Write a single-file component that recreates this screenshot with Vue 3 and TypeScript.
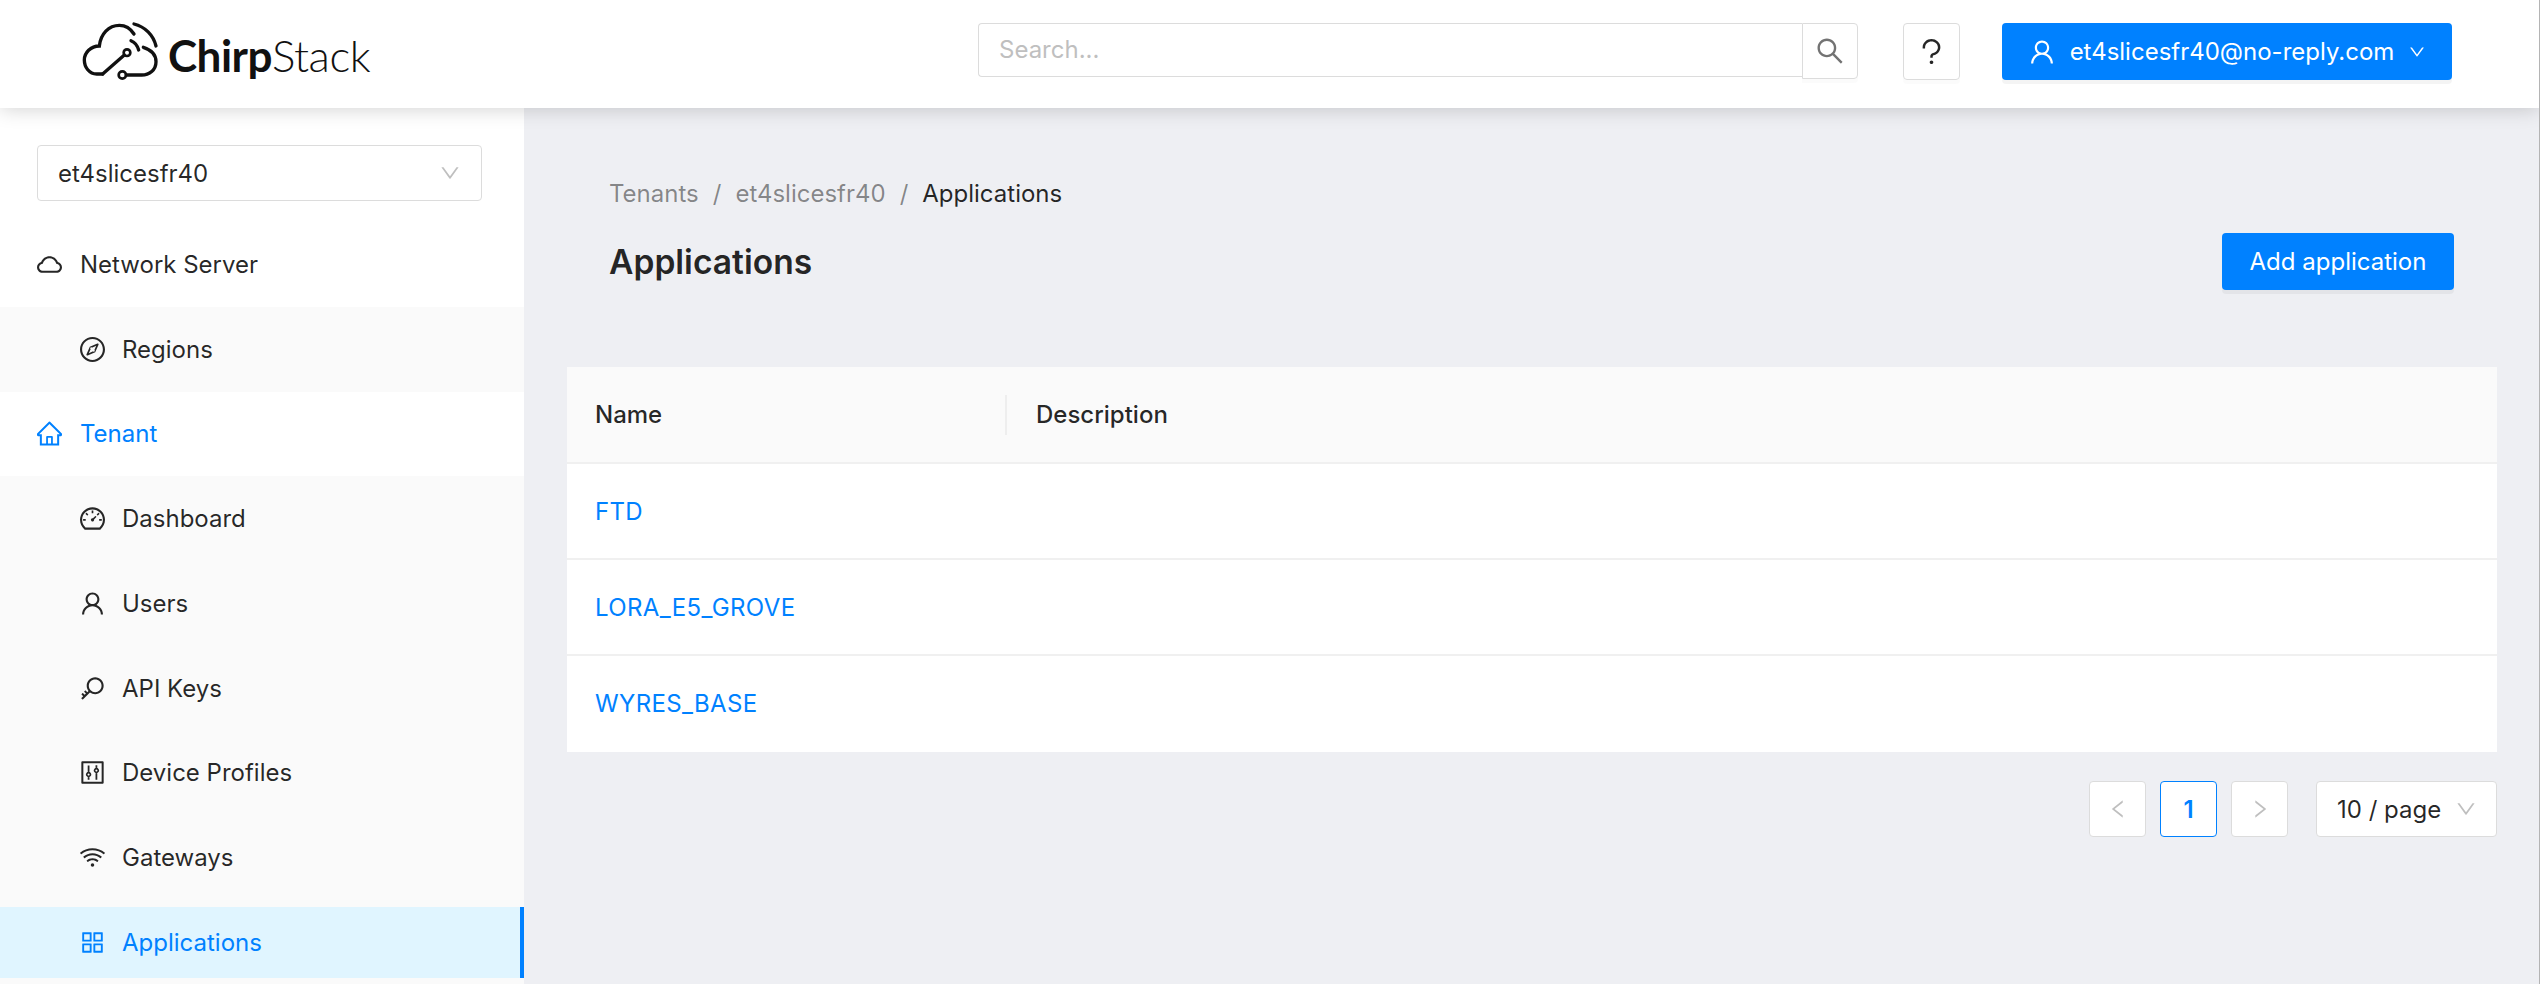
<script setup lang="ts">
interface Item { label: string; d: string; sub?: boolean; kind?: string }
const cloud = 'M811.4 418.7C765.6 297.9 648.9 212 512.2 212S258.8 297.8 213 418.6C127.3 441.1 64 519.1 64 612c0 110.5 89.5 200 199.9 200h496.2C870.5 812 960 722.5 960 612c0-92.7-63.1-170.7-148.6-193.3zm36.3 281a123.07 123.07 0 0 1-87.6 36.3H263.9c-33.1 0-64.2-12.9-87.6-36.3A123.3 123.3 0 0 1 140 612c0-28 9.1-54.3 26.2-76.3a125.7 125.7 0 0 1 66.1-43.7l37.9-9.9 13.9-36.6c8.6-22.8 20.6-44.1 35.7-63.4a245.6 245.6 0 0 1 52.4-49.9c41.1-28.9 89.5-44.2 140-44.2s98.9 15.3 140 44.2c19.9 14 37.5 30.8 52.4 49.9 15.1 19.3 27.1 40.6 35.7 63.4l13.8 36.5 37.8 10c54.3 14.5 92.1 63.8 92.1 120 0 33.1-12.9 64.3-36.3 87.7z'
const compass = 'M512 64C264.6 64 64 264.6 64 512s200.6 448 448 448 448-200.6 448-448S759.4 64 512 64zm0 820c-205.4 0-372-166.6-372-372s166.6-372 372-372 372 166.6 372 372-166.6 372-372 372zm198.4-588.1a32 32 0 0 0-24.5.5L414.9 415 296.4 686c-3.6 8.2-3.6 17.5 0 25.7 3.4 7.8 9.7 13.9 17.7 17 3.8 1.5 7.7 2.2 11.7 2.2 4.4 0 8.7-.9 12.8-2.7l271-118.6 118.5-271a32.06 32.06 0 0 0-17.7-42.7zM576.8 534.4l26.2 26.2-42.4 42.4-26.2-26.2L380 644.4 447.5 490 422 464.4l42.4-42.4 25.5 25.5L644.4 380l-67.6 154.4z'
const home = 'M946.5 505L560.1 118.8l-25.9-25.9a31.5 31.5 0 0 0-44.4 0L77.5 505a63.9 63.9 0 0 0-18.8 46c.4 35.2 29.7 63.3 64.9 63.3h42.5V940h691.8V614.3h43.4c17.1 0 33.2-6.7 45.3-18.8a63.6 63.6 0 0 0 18.7-45.3c0-17-6.7-33.1-18.8-45.2zM568 868H456V664h112v204zm217.9-325.7V868H632V640c0-22.1-17.9-40-40-40H432c-22.1 0-40 17.9-40 40v228H238.1V542.3h-96l370-369.7 23.1 23.1L882 542.3h-96.1z'
const dashboard = 'M924.8 385.6a446.7 446.7 0 0 0-96-142.4 446.7 446.7 0 0 0-142.4-96C631.1 123.8 572.5 112 512 112s-119.1 11.8-174.4 35.2a446.7 446.7 0 0 0-142.4 96 446.7 446.7 0 0 0-96 142.4C75.8 440.9 64 499.5 64 560c0 132.7 58.3 257.7 159.9 343.1l1.7 1.4c5.8 4.8 13.1 7.5 20.6 7.5h531.7c7.5 0 14.8-2.7 20.6-7.5l1.7-1.4C901.7 817.7 960 692.7 960 560c0-60.5-11.9-119.1-35.2-174.4zM761.4 836H262.6A371.12 371.12 0 0 1 140 560c0-99.4 38.7-192.8 109-263 70.3-70.3 163.7-109 263-109 99.4 0 192.8 38.7 263 109 70.3 70.3 109 163.7 109 263 0 105.6-44.5 205.5-122.6 276zM623.5 421.5a8.03 8.03 0 0 0-11.3 0L527.7 506c-18.7-5-39.4-.2-54.1 14.5a55.95 55.95 0 0 0 0 79.2 55.95 55.95 0 0 0 79.2 0 55.87 55.87 0 0 0 14.5-54.1l84.5-84.5c3.1-3.1 3.1-8.2 0-11.3l-28.3-28.3zM490 320h44c4.4 0 8-3.6 8-8v-80c0-4.4-3.6-8-8-8h-44c-4.4 0-8 3.6-8 8v80c0 4.4 3.6 8 8 8zm260 218v44c0 4.4 3.6 8 8 8h80c4.4 0 8-3.6 8-8v-44c0-4.4-3.6-8-8-8h-80c-4.4 0-8 3.6-8 8zm12.7-197.2l-31.1-31.1a8.03 8.03 0 0 0-11.3 0l-56.6 56.6a8.03 8.03 0 0 0 0 11.3l31.1 31.1c3.1 3.1 8.2 3.1 11.3 0l56.6-56.6c3.1-3.1 3.1-8.2 0-11.3zm-458.6-31.1a8.03 8.03 0 0 0-11.3 0l-31.1 31.1a8.03 8.03 0 0 0 0 11.3l56.6 56.6c3.1 3.1 8.2 3.1 11.3 0l31.1-31.1c3.1-3.1 3.1-8.2 0-11.3l-56.6-56.6zM262 530h-80c-4.4 0-8 3.6-8 8v44c0 4.4 3.6 8 8 8h80c4.4 0 8-3.6 8-8v-44c0-4.4-3.6-8-8-8z'
const user = 'M858.5 763.6a374 374 0 0 0-80.6-119.5 375.63 375.63 0 0 0-119.5-80.6c-.4-.2-.8-.3-1.2-.5C719.5 518 760 444.7 760 362c0-137-111-248-248-248S264 225 264 362c0 82.7 40.5 156 102.8 201.1-.4.2-.8.3-1.2.5-44.8 18.9-85 46-119.5 80.6a375.63 375.63 0 0 0-80.6 119.5A371.7 371.7 0 0 0 136 901.8a8 8 0 0 0 8 8.2h60c4.4 0 7.9-3.5 8-7.8 2-77.2 33-149.5 87.8-204.3 56.7-56.7 132-87.9 212.2-87.9s155.5 31.2 212.2 87.9C779 752.7 810 825 812 902.2c.1 4.4 3.6 7.8 8 7.8h60a8 8 0 0 0 8-8.2c-1-47.8-10.9-94.3-29.5-138.2zM512 534c-45.9 0-89.1-17.9-121.6-50.4S340 407.9 340 362c0-45.9 17.9-89.1 50.4-121.6S466.1 190 512 190s89.1 17.9 121.6 50.4S684 316.1 684 362c0 45.9-17.9 89.1-50.4 121.6S557.9 534 512 534z'
const key = 'M608 112c-167.9 0-304 136.1-304 304 0 70.3 23.9 135 63.9 186.5l-41.1 41.1-62.3-62.3a8.15 8.15 0 0 0-11.4 0l-39.8 39.8a8.15 8.15 0 0 0 0 11.4l62.3 62.3-44.9 44.9-62.3-62.3a8.15 8.15 0 0 0-11.4 0l-39.8 39.8a8.15 8.15 0 0 0 0 11.4l62.3 62.3-65.3 65.3a8.03 8.03 0 0 0 0 11.3l42.3 42.3c3.1 3.1 8.2 3.1 11.3 0l253.6-253.6A304.06 304.06 0 0 0 608 720c167.9 0 304-136.1 304-304S775.9 112 608 112zm161.2 465.2C726.2 620.3 668.9 644 608 644c-60.9 0-118.2-23.7-161.2-66.8-43.1-43-66.8-100.3-66.8-161.2 0-60.9 23.7-118.2 66.8-161.2 43-43.1 100.3-66.8 161.2-66.8 60.9 0 118.2 23.7 161.2 66.8 43.1 43 66.8 100.3 66.8 161.2 0 60.9-23.7 118.2-66.8 161.2z'
const control = 'M880 112H144c-17.7 0-32 14.3-32 32v736c0 17.7 14.3 32 32 32h736c17.7 0 32-14.3 32-32V144c0-17.7-14.3-32-32-32zm-40 728H184V184h656v656zM340 264h64v222h-64zM340 682h64v86h-64zM372 488a96 96 0 1 0 .01 0zm0 60a36 36 0 1 1-.01 0zM620 256h64v86h-64zM620 538h64v230h-64zM652 344a96 96 0 1 0 .01 0zm0 60a36 36 0 1 1-.01 0z'
const wifi = 'M723 620.5C666.8 571.6 593.4 542 513 542s-153.8 29.6-210.1 78.6a8.1 8.1 0 0 0-.8 11.2l36 42.9c2.9 3.4 8 3.8 11.4.9C393.1 637.2 450.3 614 513 614s119.9 23.2 163.5 61.5c3.4 2.9 8.5 2.5 11.4-.9l36-42.9c2.8-3.3 2.4-8.3-.9-11.2zm117.4-140.1C751.7 406.5 637.6 362 513 362s-238.7 44.5-327.5 118.4a8.05 8.05 0 0 0-1 11.3l36 42.9c2.8 3.4 7.9 3.8 11.2 1C308 472.2 406.1 434 513 434s205 38.2 281.2 101.6c3.4 2.8 8.4 2.4 11.2-1l36-42.9c2.8-3.4 2.4-8.5-1-11.3zm116.7-139C835.7 241.8 680.3 182 511 182c-168.2 0-322.6 59-443.7 157.4a8 8 0 0 0-1.1 11.4l36 42.9c2.8 3.3 7.8 3.8 11.1 1.1C222 306.7 360.3 254 511 254c151.8 0 291 53.5 400 142.7 3.4 2.8 8.4 2.3 11.2-1.1l36-42.9c2.9-3.4 2.4-8.5-1.1-11.3zM448 778a64 64 0 1 0 128 0 64 64 0 1 0-128 0z'
const appstore = 'M464 144H160c-8.8 0-16 7.2-16 16v304c0 8.8 7.2 16 16 16h304c8.8 0 16-7.2 16-16V160c0-8.8-7.2-16-16-16zm-52 268H212V212h200v200zm452-268H560c-8.8 0-16 7.2-16 16v304c0 8.8 7.2 16 16 16h304c8.8 0 16-7.2 16-16V160c0-8.8-7.2-16-16-16zm-52 268H612V212h200v200zM464 544H160c-8.8 0-16 7.2-16 16v304c0 8.8 7.2 16 16 16h304c8.8 0 16-7.2 16-16V560c0-8.8-7.2-16-16-16zm-52 268H212V612h200v200zm452-268H560c-8.8 0-16 7.2-16 16v304c0 8.8 7.2 16 16 16h304c8.8 0 16-7.2 16-16V560c0-8.8-7.2-16-16-16zm-52 268H612V612h200v200z'
const search = 'M909.6 854.5L649.9 594.8C690.2 542.7 712 479 712 412c0-80.2-31.3-155.4-87.9-212.1-56.6-56.7-132-87.9-212.1-87.9s-155.5 31.3-212.1 87.9C143.2 256.5 112 331.8 112 412c0 80.1 31.3 155.5 87.9 212.1C256.5 680.8 331.8 712 412 712c67 0 130.6-21.8 182.7-62l259.7 259.6a8.2 8.2 0 0 0 11.6 0l43.6-43.5a8.2 8.2 0 0 0 0-11.6zM570.4 570.4C528 612.7 471.8 636 412 636s-116-23.3-158.4-65.6C211.3 528 188 471.8 188 412s23.3-116.1 65.6-158.4C296 211.3 352.2 188 412 188s116.1 23.2 158.4 65.6S636 352.2 636 412s-23.3 116.1-65.6 158.4z'
const down = 'M884 256h-75c-5.1 0-9.9 2.5-12.9 6.6L512 654.2 227.9 262.6c-3-4.1-7.8-6.6-12.9-6.6h-75c-6.5 0-10.3 7.4-6.5 12.7l352.6 486.1c12.8 17.6 39 17.6 51.7 0l352.6-486.1c3.9-5.3.1-12.7-6.4-12.7z'
const left = 'M724 218.3V141c0-6.7-7.7-10.4-12.9-6.3L260.3 486.8a31.86 31.86 0 0 0 0 50.3l450.8 352.1c5.3 4.1 12.9.4 12.9-6.3v-77.3c0-4.9-2.3-9.6-6.1-12.6l-360-281 360-281.1c3.8-3 6.1-7.7 6.1-12.6z'
const right = 'M765.7 486.8L314.9 134.7A7.97 7.97 0 0 0 302 141v77.3c0 4.9 2.3 9.6 6.1 12.6l360 281.1-360 281.1c-3.9 3-6.1 7.7-6.1 12.6V883c0 6.7 7.7 10.4 12.9 6.3l450.8-352.1a31.96 31.96 0 0 0 0-50.4z'
const question = 'M764 280.9c-14-30.6-33.9-58.1-59.3-81.6C653.1 151.4 584.6 125 512 125s-141.1 26.4-192.7 74.2c-25.4 23.6-45.3 51-59.3 81.7-14.6 32-22 65.9-22 100.9v27c0 6.2 5 11.2 11.2 11.2h54c6.2 0 11.2-5 11.2-11.2v-27c0-99.5 88.6-180.4 197.6-180.4s197.6 80.9 197.6 180.4c0 40.8-14.5 79.2-42 111.2-27.2 31.7-65.6 54.4-108.1 64-24.3 5.5-46.2 19.2-61.7 38.8a110.85 110.85 0 0 0-23.9 68.6v31.4c0 6.2 5 11.2 11.2 11.2h54c6.2 0 11.2-5 11.2-11.2v-31.4c0-15.7 10.9-29.5 26-32.9 58.4-13.2 111.4-44.7 149.3-88.7 19.1-22.3 34-47.1 44.3-74 10.7-27.9 16.1-57.2 16.1-87 0-35-7.4-69-22-100.9zM512 787c-30.9 0-56 25.1-56 56s25.1 56 56 56 56-25.1 56-56-25.1-56-56-56z'

const items: Item[] = [
  { label: 'Network Server', d: cloud },
  { label: 'Regions', d: compass, sub: true },
  { label: 'Tenant', d: home, kind: 'open' },
  { label: 'Dashboard', d: dashboard, sub: true },
  { label: 'Users', d: user, sub: true },
  { label: 'API Keys', d: key, sub: true },
  { label: 'Device Profiles', d: control, sub: true },
  { label: 'Gateways', d: wifi, sub: true },
  { label: 'Applications', d: appstore, sub: true, kind: 'selected' },
]
const rows: string[] = ['FTD', 'LORA_E5_GROVE', 'WYRES_BASE']
</script>

<template>
  <div class="page">
    <header class="top">
      <div class="logo">
        <svg class="mark" viewBox="0 0 312 270" fill="none" stroke="#111" stroke-width="10" stroke-linecap="round">
          <path d="M128 192H110C88 192 73 172 73 150C73 128 92 108 118 108C122 72 146 46 178 46C198 46 212 56 222 72" />
          <path d="M250 112C275 120 288 136 288 155C288 180 268 195 245 195H199" />
          <path d="M128 192L193 135" />
          <circle cx="201" cy="128" r="10" stroke-width="8" />
          <circle cx="187" cy="195" r="11" stroke-width="8" />
          <path d="M222 42C255 50 280 75 288 108" />
          <path d="M213 92C225 97 232 105 236 120" />
        </svg>
        <span class="brand"><b>Chirp</b>Stack</span>
      </div>
      <div class="search">
        <div class="search-input">Search...</div>
        <div class="search-btn"><svg class="ico22" viewBox="64 64 896 896"><path :d="search" /></svg></div>
      </div>
      <div class="help"><svg class="ico-q" viewBox="64 64 896 896"><path :d="question" /></svg></div>
      <div class="account">
        <svg class="ico22" viewBox="64 64 896 896"><path :d="user" /></svg>
        <span>et4slicesfr40@no-reply.com</span>
        <svg class="ico14" viewBox="64 64 896 896"><path :d="down" /></svg>
      </div>
    </header>
    <div class="body">
      <aside class="side">
        <div class="side-top">
          <div class="tenant">
            <span>et4slicesfr40</span>
            <svg class="caret" viewBox="64 64 896 896"><path :d="down" /></svg>
          </div>
        </div>
        <nav class="menu">
          <div v-for="it in items" :key="it.label" class="row" :class="[{ sub: it.sub }, it.kind]">
            <div class="row-in">
              <svg class="ico24" viewBox="64 64 896 896"><path :d="it.d" /></svg>
              <span>{{ it.label }}</span>
            </div>
          </div>
        </nav>
      </aside>
      <main class="main">
        <div class="head">
          <div class="crumbs">
            <span class="dim">Tenants</span><span class="sep">/</span>
            <span class="dim">et4slicesfr40</span><span class="sep">/</span>
            <span>Applications</span>
          </div>
          <div class="title-row">
            <h1>Applications</h1>
            <div class="add">Add application</div>
          </div>
        </div>
        <section class="table">
          <div class="thead">
            <div class="c1">Name</div>
            <div class="c2">Description</div>
          </div>
          <div v-for="r in rows" :key="r" class="tr">{{ r }}</div>
        </section>
        <div class="pager">
          <div class="pg"><svg class="ico20" viewBox="64 64 896 896"><path :d="left" /></svg></div>
          <div class="pg cur">1</div>
          <div class="pg"><svg class="ico20" viewBox="64 64 896 896"><path :d="right" /></svg></div>
          <div class="size">
            <span>10 / page</span>
            <svg class="caret" viewBox="64 64 896 896"><path :d="down" /></svg>
          </div>
        </div>
      </main>
    </div>
  </div>
</template>

<style>
html, body { margin: 0; background: #eeeff3; overflow: hidden; }
</style>

<style scoped>
.page { width: 2540px; height: 984px; box-sizing: border-box; border-right: 1px solid #b4b4b4; display: flex; flex-direction: column; overflow: hidden; font-family: Inter, "Liberation Sans", sans-serif; font-size: 24px; color: rgba(0,0,0,.85); }
svg { fill: currentColor; flex: none; display: block; }
.top { height: 108px; flex: none; background: #fff; display: flex; align-items: flex-start; padding: 23px 0 0 60px; box-sizing: border-box; box-shadow: 0 0 20px rgba(0,0,0,.2); position: relative; z-index: 2; }
.logo { display: flex; align-items: center; width: 918px; margin-top: -22px; height: 108px; }
.mark { width: 104px; height: 90px; fill: none; margin-top: -1px; }
.mark path, .mark circle { fill: none; }
.brand { font-family: Lato, sans-serif; font-size: 44px; font-weight: 300; color: #111; margin-left: 4px; letter-spacing: -.5px; }
.brand b { font-weight: 700; }
.search { display: flex; width: 880px; height: 56px; align-items: flex-start; }
.search-input { width: 825px; height: 54px; box-sizing: border-box; border: 1.5px solid #dcdcdc; border-right: 0; border-radius: 4px 0 0 4px; padding-left: 20px; line-height: 51px; color: #bfbfbf; background: #fff; }
.search-btn { width: 56px; height: 56px; box-sizing: border-box; border: 1.5px solid #dcdcdc; border-radius: 0 4px 4px 0; display: flex; align-items: center; justify-content: center; color: #737373; box-shadow: 0 4px 0 rgba(0,0,0,.016); }
.ico22 { width: 28px; height: 28px; }
.ico14 { width: 16px; height: 16px; }
.ico24 { width: 25px; height: 25px; }
.ico20 { width: 20px; height: 20px; color: #bfbfbf; }
.ico-q { width: 29px; height: 29px; }
.help { margin-left: 45px; width: 57px; height: 57px; box-sizing: border-box; border: 1.5px solid #dcdcdc; border-radius: 4px; display: flex; align-items: center; justify-content: center; box-shadow: 0 4px 0 rgba(0,0,0,.016); }
.account { margin-left: 42px; width: 450px; height: 57px; box-sizing: border-box; background: #0081ff; color: #fff; border-radius: 4px; display: flex; align-items: center; justify-content: center; gap: 15px; box-shadow: 0 4px 0 rgba(0,0,0,.045); }
.account .ico22 { width: 26px; height: 26px; }
.body { flex: 1; display: flex; min-height: 0; }
.side { width: 524px; flex: none; background: #fff; }
.side-top { height: 114px; box-sizing: border-box; padding: 37px 42px 0 37px; }
.tenant { height: 56px; box-sizing: border-box; border: 1.5px solid #dcdcdc; border-radius: 4px; padding: 0 21px 0 20px; display: flex; align-items: center; justify-content: space-between; }
.caret { width: 20px; height: 20px; color: #bfbfbf; }
.menu { display: flex; flex-direction: column; width: 526px; }
.row { height: 84.75px; box-sizing: border-box; display: flex; align-items: center; width: 524px; }
.row-in { display: flex; align-items: center; gap: 18px; padding-left: 37px; flex: 1; height: 71px; }
.row.sub { background: #fafafa; }
.row.sub .row-in { padding-left: 80px; gap: 17px; }
.open { color: #0081ff; }
.selected { color: #0081ff; width: 525px; }
.selected .row-in { background: #e0f5ff; border-right: 5px solid #0081ff; }
.main { flex: 1; min-width: 0; padding: 0 42px 0 43px; background: #eeeff3; }
.head { padding: 66px 43px 0 42px; height: 259px; box-sizing: border-box; }
.crumbs { display: flex; line-height: 40px; height: 40px; }
.sep { margin: 0 14px; color: rgba(0,0,0,.45); }
.dim { color: rgba(0,0,0,.45); }
.title-row { display: flex; justify-content: space-between; align-items: center; margin-top: 18px; height: 58px; }
h1 { margin: 0; font-size: 33.6px; font-weight: 600; }
.add { width: 232px; height: 57px; line-height: 57px; text-align: center; background: #0081ff; color: #fff; border-radius: 4px; box-shadow: 0 4px 0 rgba(0,0,0,.045); }
.table { background: #fff; border-radius: 4px 4px 0 0; }
.thead { height: 97px; display: flex; align-items: center; background: #fafafa; border-bottom: 2px solid #f0f0f0; box-sizing: border-box; font-weight: 500; }
.c1 { width: 440px; padding-left: 28px; box-sizing: border-box; height: 40px; line-height: 40px; border-right: 2px solid #eee; }
.c2 { padding-left: 29px; }
.tr { height: 96px; line-height: 95px; padding-left: 28px; color: #0081ff; border-bottom: 2px solid #f0f0f0; box-sizing: border-box; letter-spacing: .35px; }
.tr:last-child { border-bottom: 0; }
.pager { display: flex; justify-content: flex-end; align-items: center; margin-top: 29px; }
.pg { width: 57px; height: 56px; box-sizing: border-box; border: 1.5px solid #dcdcdc; border-radius: 4px; background: #fff; display: flex; align-items: center; justify-content: center; margin-right: 14px; }
.cur { border-color: #0081ff; color: #0081ff; font-weight: 600; }
.size { margin-left: 14px; width: 181px; height: 56px; box-sizing: border-box; border: 1.5px solid #dcdcdc; border-radius: 4px; background: #fff; display: flex; align-items: center; justify-content: space-between; padding: 0 20px; }
</style>
